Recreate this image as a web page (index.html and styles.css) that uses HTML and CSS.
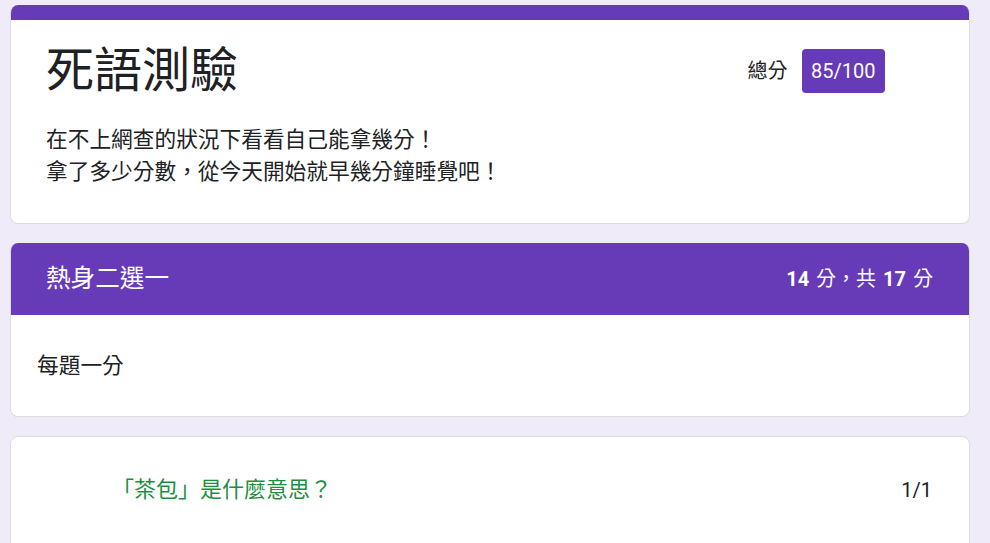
FILE: index.html
```html
<!DOCTYPE html>
<html lang="zh-Hant">
<head>
<meta charset="utf-8">
<title>死語測驗</title>
<link rel="stylesheet" href="styles.css">
</head>
<body>
<main class="page">
  <section class="card header-card">
    <div class="accent"></div>
    <div class="header-body">
      <div class="title-row">
        <h1 class="title">死語測驗</h1>
        <div class="score">
          <span class="score-label">總分</span>
          <span class="score-badge">85/100</span>
        </div>
      </div>
      <p class="desc">在不上網查的狀況下看看自己能拿幾分！<br>拿了多少分數，從今天開始就早幾分鐘睡覺吧！</p>
    </div>
  </section>

  <section class="card section-card">
    <div class="section-head">
      <span class="section-title">熱身二選一</span>
      <span class="section-points"><b>14</b> 分，共 <b>17</b> 分</span>
    </div>
    <div class="section-body">每題一分</div>
  </section>

  <section class="card question-card">
    <div class="question-row">
      <span class="question">「茶包」是什麼意思？</span>
      <span class="points">1/1</span>
    </div>
  </section>
</main>
</body>
</html>
```

FILE: styles.css
```css
* { box-sizing: border-box; }

html, body {
  margin: 0;
  padding: 0;
  height: 100%;
  overflow: hidden;
}

body {
  background: #f0ebf8;
  font-family: Roboto, "Noto Sans CJK TC", "Noto Sans CJK SC", sans-serif;
  color: #202124;
}

.page {
  width: 960px;
  margin-left: 10px;
  padding-top: 5px;
  display: flex;
  flex-direction: column;
  gap: 19px;
}

.card {
  background: #fff;
  border: 1px solid #dadce0;
  border-radius: 8px;
  overflow: hidden;
}

.header-card {
  border-top: none;
}

.accent {
  height: 15px;
  background: #673ab7;
  margin: 0 -1px;
}

.header-body {
  padding: 23px 35px 35px 35px;
}

.title-row {
  display: flex;
  align-items: center;
  justify-content: space-between;
}

.title {
  margin: 0;
  font-weight: 400;
  font-size: 48px;
  line-height: 56px;
  letter-spacing: 0;
}

.score {
  display: flex;
  align-items: center;
  gap: 14px;
  margin-right: 49px;
}

.score-label {
  font-size: 20px;
  line-height: 28px;
}

.score-badge {
  background: #673ab7;
  color: #fff;
  font-size: 20px;
  line-height: 44px;
  height: 44px;
  padding: 0 9.5px;
  border-radius: 4px;
}

.desc {
  margin: 25px 0 0 0;
  font-size: 21.7px;
  line-height: 32px;
}

.section-card {
  border-top: none;
}

.section-head {
  background: #673ab7;
  color: #fff;
  height: 72px;
  margin: 0 -1px;
  padding: 0 37px 0 36px;
  display: flex;
  align-items: center;
  justify-content: space-between;
}

.section-title {
  font-size: 24.6px;
  line-height: 32px;
}

.section-points {
  font-size: 20px;
  line-height: 28px;
  word-spacing: 2px;
}

.section-points b {
  font-weight: 700;
}

.section-body {
  padding: 35px 26px 34px 26px;
  font-size: 21.7px;
  line-height: 32px;
}

.question-card {
  height: 130px;
}

.question-row {
  padding: 37px 37px 0 101px;
  display: flex;
  align-items: center;
  justify-content: space-between;
}

.question {
  color: #1e8e3e;
  font-size: 22px;
  line-height: 32px;
}

.points {
  font-size: 20px;
  line-height: 32px;
}
```
